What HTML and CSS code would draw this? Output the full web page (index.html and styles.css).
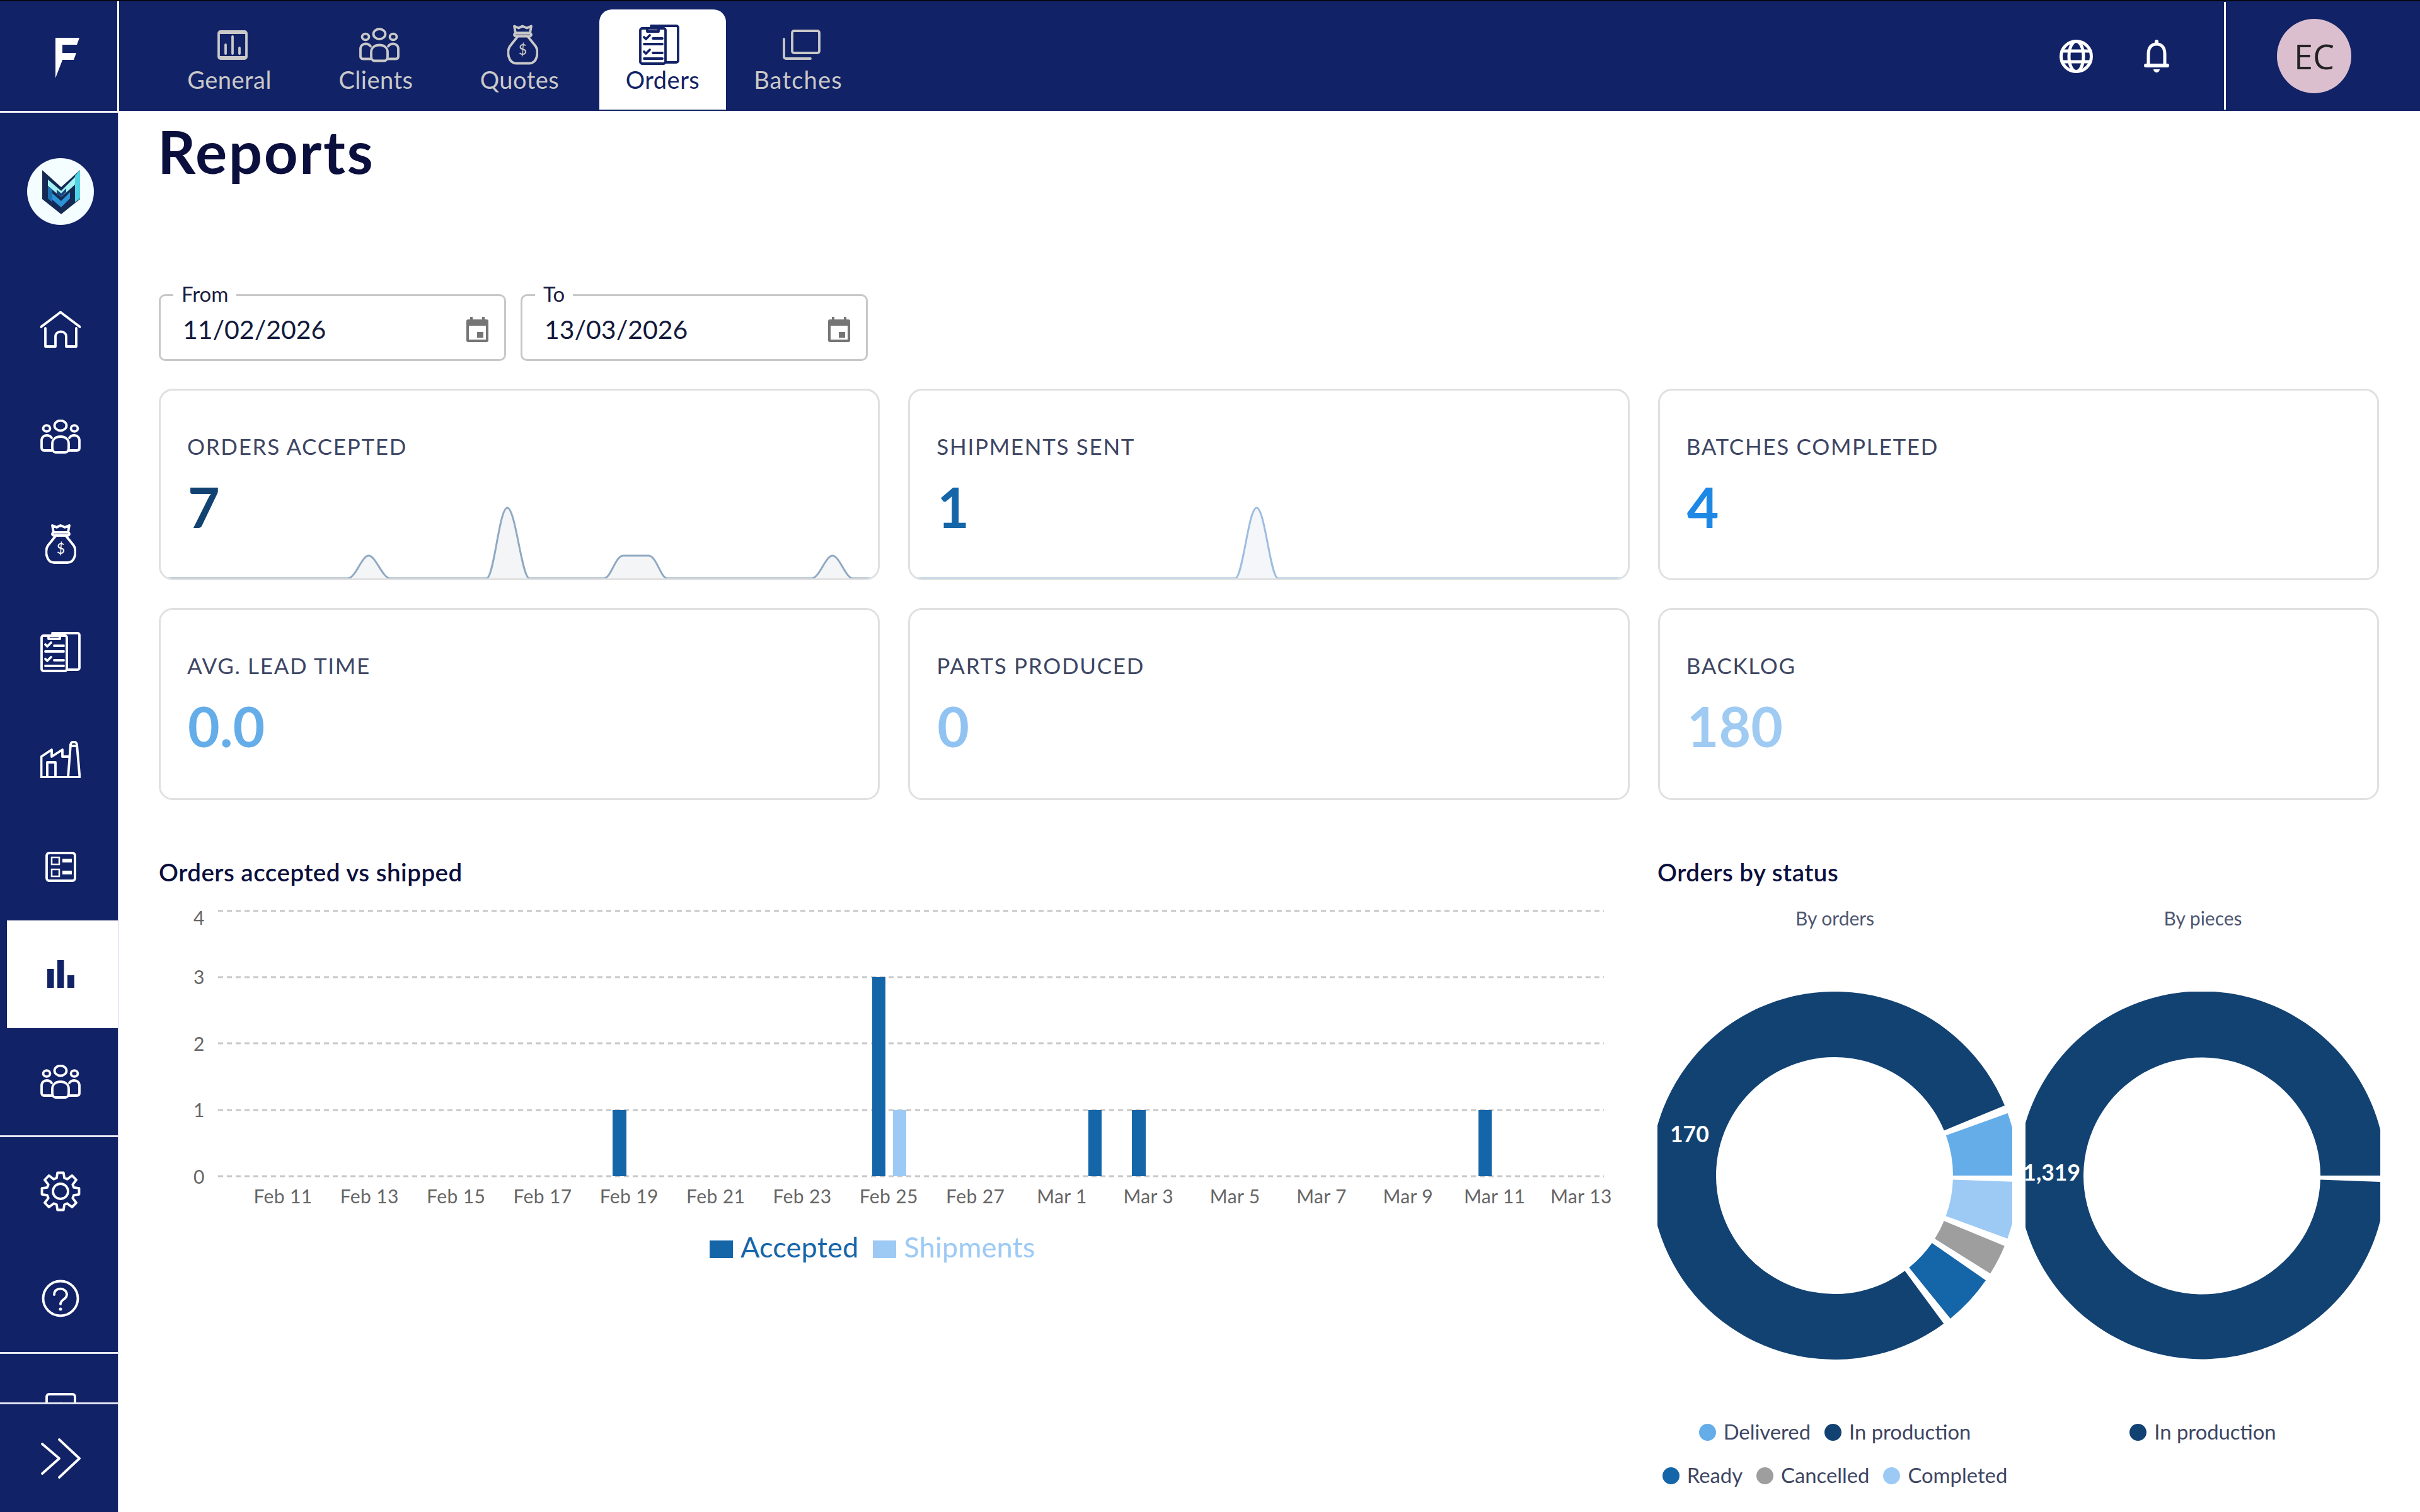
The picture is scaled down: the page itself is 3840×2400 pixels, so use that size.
FILE: index.html
```html
<!DOCTYPE html>
<html lang="en">
<head>
<meta charset="utf-8">
<title>Reports</title>
<link rel="stylesheet" href="styles.css">
</head>
<body>
<svg class="sprite" xmlns="http://www.w3.org/2000/svg">
  <symbol id="i-general" viewBox="0 0 48 49"><rect x="2" y="3" width="44" height="43" rx="3"/><path d="M2 7V5a3 3 0 0 1 3-3h38a3 3 0 0 1 3 3v2zM2 42v2a3 3 0 0 0 3 3h38a3 3 0 0 0 3-3v-2z" class="solid"/><path d="M13 38V24M24 38V11M35 38V29"/></symbol>
  <symbol id="i-clients" viewBox="0 0 64 54"><ellipse cx="32" cy="9.5" rx="9.5" ry="8"/><ellipse cx="10" cy="14" rx="5.5" ry="4.8"/><ellipse cx="54" cy="14" rx="5.5" ry="4.8"/><path d="M19 45V38C19 31 25 27 32 27S45 31 45 38V45C45 49 43 52 40 52H24C21 52 19 49 19 45Z"/><path d="M19 49H6C3 49 2 47 2 45V33C2 28 6 25 10 25C13 25 16 26 18 29"/><path d="M45 49H58C61 49 62 47 62 45V33C62 28 58 25 54 25C51 25 48 26 46 29"/></symbol>
  <symbol id="i-bag" viewBox="0 0 49 63"><path d="M11 2L18 5L24 2L31 5L38 2L36 13H13Z"/><rect x="11" y="13" width="27" height="5" rx="2.5"/><path d="M16 19L4 34C-1 42 1 61 14 61H35C48 61 50 42 45 34L33 19"/><text x="24.5" y="47" class="dollar">$</text></symbol>
  <symbol id="i-orders" viewBox="0 0 64 64"><path d="M19 2H59a3 3 0 0 1 3 3V57a3 3 0 0 1-3 3H42"/><rect x="2" y="6" width="40" height="56" rx="3"/><path d="M13 11V6H18L22 1L26 6H31V11Z"/><path d="M8 20l3 3l6-6M22 22H37M8 31H37M8 43l3 3l6-6M22 45H37M8 54H37"/></symbol>
  <symbol id="i-batches" viewBox="0 0 60 48"><rect x="15" y="2" width="43" height="35" rx="3"/><path d="M2 15V43a3 3 0 0 0 3 3H44"/></symbol>
  <symbol id="i-home" viewBox="0 0 64 58"><path d="M1 25L32 1.500L63 25"/><path d="M8 27V56H24V40C24 30 41 30 41 40V56H57V27"/></symbol>
  <symbol id="i-factory" viewBox="0 0 64 59"><path d="M1.500 58H62.500L58 6C58 0 48 0 48 6L44 58"/><path d="M1.500 58V25L18 14V25L35 14V25H46"/><rect x="11" y="34" width="13" height="24"/><path d="M48 8H58"/></symbol>
  <symbol id="i-form" viewBox="0 0 49 48"><rect x="2" y="2" width="45" height="44" rx="4"/><rect x="10" y="9" width="12" height="11" class="thin"/><rect x="10" y="28" width="12" height="11" class="thin"/><rect x="27" y="11" width="15" height="6" class="solid"/><rect x="27" y="30" width="15" height="6" class="solid"/></symbol>
  <symbol id="i-chart" viewBox="0 0 43 44"><rect x="0" y="14" width="10.500" height="30" class="solid"/><rect x="16" y="0" width="10.500" height="44" class="solid"/><rect x="32" y="24" width="11" height="20" class="solid"/></symbol>
  <symbol id="i-gear" viewBox="0 0 64 64"><path d="M25.940 10.850L27.150 2.500H36.850L38.060 10.850L42.670 12.760L50.220 6.920L57.080 13.780L51.240 21.330L53.150 25.940L61.500 27.150V36.850L53.150 38.060L51.240 42.670L57.080 50.220L50.220 57.080L42.670 51.240L38.060 53.150L36.850 61.500H27.150L25.940 53.150L21.330 51.240L13.780 57.080L6.920 50.220L12.760 42.670L10.850 38.060L2.500 36.850V27.150L10.850 25.940L12.760 21.330L6.920 13.780L13.780 6.920L21.330 12.760Z"/><circle cx="32" cy="32" r="12"/></symbol>
  <symbol id="i-help" viewBox="0 0 60 60"><circle cx="30" cy="30" r="27.500"/><path d="M20 24C20 11 40 12 40 24C40 32 30 31 30 39"/><circle cx="30" cy="47" r="2.500" class="solid"/></symbol>
  <symbol id="i-upload" viewBox="0 0 49 48"><rect x="2" y="2" width="45" height="44" rx="4"/><path d="M24.500 14L15 26H34Z" class="solid"/></symbol>
  <symbol id="i-chevrons" viewBox="0 0 64 64"><path d="M3 9L30 32L3 56M30 2L62 32L30 62"/></symbol>
  <symbol id="i-globe" viewBox="0 0 53 53"><circle cx="26.500" cy="26.500" r="24"/><ellipse cx="26.500" cy="26.500" rx="11.500" ry="24"/><path d="M4 18H49M4 35H49"/></symbol>
  <symbol id="i-bell" viewBox="0 0 40 52"><path d="M7 41V23C7 12 12 7 20 7S33 12 33 23V41"/><rect x="0" y="38" width="40" height="6" rx="3" class="solid"/><rect x="17" y="0" width="6" height="9" rx="3" class="solid"/><path d="M15 47H25C25 50 22 52 20 52S15 50 15 47Z" class="solid"/></symbol>
  <symbol id="i-calendar" viewBox="0 0 35 40"><path d="M6 0H10V4H25V0H29V4H32a3 3 0 0 1 3 3V37a3 3 0 0 1-3 3H3a3 3 0 0 1-3-3V7a3 3 0 0 1 3-3H6ZM4 14V36H31V14ZM17 24H27V33H17Z" class="solid even"/></symbol>
</svg>

<header class="topbar">
  <div class="brand">
    <svg class="brand-f" viewBox="0 0 38 64"><path d="M0 0H38L34 11H11V24H33L29 35H11L10 38L0 64Z"/></svg>
  </div>
  <nav class="tabs">
    <a class="tab"><span class="tab-icon"><svg class="ico i48"><use href="#i-general"/></svg></span><span class="tab-label">General</span></a>
    <a class="tab"><span class="tab-icon"><svg class="ico i64x57"><use href="#i-clients"/></svg></span><span class="tab-label">Clients</span></a>
    <a class="tab"><span class="tab-icon"><svg class="ico i49x64"><use href="#i-bag"/></svg></span><span class="tab-label">Quotes</span></a>
    <a class="tab active"><span class="tab-icon"><svg class="ico i64"><use href="#i-orders"/></svg></span><span class="tab-label">Orders</span></a>
    <a class="tab tab-end"><span class="tab-icon"><svg class="ico i60x48"><use href="#i-batches"/></svg></span><span class="tab-label">Batches</span></a>
  </nav>
  <div class="actions">
    <svg class="ico globe"><use href="#i-globe"/></svg>
    <svg class="ico bell"><use href="#i-bell"/></svg>
  </div>
  <div class="user"><span class="avatar">EC</span></div>
</header>

<div class="layout">
  <aside class="sidebar">
    <div class="org"><svg class="org-logo" viewBox="0 0 106 106">
      <circle cx="53" cy="53" r="53" fill="#f4fdff"/>
      <path d="M24 19L54 46L84 19V65L54 89L24 65Z" fill="#142a55"/>
      <path d="M33 34L54 52L76 30V42L54 62L33 44Z" fill="#a4f2f2"/>
      <path d="M84 19V64L76 70V28Z" fill="#4fd4e6"/>
      <path d="M33 44V64L40 70V50Z" fill="#1d6fb0"/>
      <path d="M40 56L54 68L68 54V64L54 78L40 66Z" fill="#2c93d6"/>
      <path d="M47 50L54 56L62 48V54L54 62L47 56Z" fill="#16457c"/>
    </svg></div>
    <nav class="side-nav">
      <div class="side-group">
        <a class="side-item"><svg class="ico i64x58"><use href="#i-home"/></svg></a>
        <a class="side-item"><svg class="ico i64x54"><use href="#i-clients"/></svg></a>
        <a class="side-item"><svg class="ico i49x63"><use href="#i-bag"/></svg></a>
        <a class="side-item"><svg class="ico i64"><use href="#i-orders"/></svg></a>
        <a class="side-item"><svg class="ico i64x59"><use href="#i-factory"/></svg></a>
        <a class="side-item"><svg class="ico i49x48"><use href="#i-form"/></svg></a>
        <a class="side-item active"><svg class="ico i43x44"><use href="#i-chart"/></svg></a>
        <a class="side-item"><svg class="ico i64x54"><use href="#i-clients"/></svg></a>
      </div>
      <div class="side-group">
        <a class="side-item"><svg class="ico i64"><use href="#i-gear"/></svg></a>
        <a class="side-item"><svg class="ico i60"><use href="#i-help"/></svg></a>
      </div>
      <div class="side-group">
        <a class="side-item"><svg class="ico i49x48"><use href="#i-upload"/></svg></a>
      </div>
    </nav>
    <div class="side-foot"><svg class="ico i64"><use href="#i-chevrons"/></svg></div>
  </aside>

  <main class="main">
    <h1 class="title">Reports</h1>

    <div class="dates">
      <fieldset class="date"><legend>From</legend><div class="date-row"><span class="date-value">11/02/2026</span><svg class="ico cal"><use href="#i-calendar"/></svg></div></fieldset>
      <fieldset class="date"><legend>To</legend><div class="date-row"><span class="date-value">13/03/2026</span><svg class="ico cal"><use href="#i-calendar"/></svg></div></fieldset>
    </div>

    <section class="kpis">
      <article class="kpi">
        <div class="kpi-label">ORDERS ACCEPTED</div>
        <div class="kpi-value c1">7</div>
        <svg class="spark spark-a" viewBox="0 0 1144 130" width="1144" height="130">
          <path class="fill" d="M300 127C312 127 322 91 333 91C344 91 355 127 367 127ZM520 127C532 127 540 15 553 15C566 15 576 127 588 127ZM706 127C718 127 724 91 737 91H777C790 91 796 127 807 127ZM1036 127C1048 127 1058 91 1069 91C1080 91 1090 127 1101 127Z"/>
          <path class="line" d="M0 127H300C312 127 322 91 333 91C344 91 355 127 367 127H520C532 127 540 15 553 15C566 15 576 127 588 127H706C718 127 724 91 737 91H777C790 91 796 127 807 127H1036C1048 127 1058 91 1069 91C1080 91 1090 127 1101 127H1144"/>
        </svg>
      </article>
      <article class="kpi">
        <div class="kpi-label">SHIPMENTS SENT</div>
        <div class="kpi-value c2">1</div>
        <svg class="spark spark-b" viewBox="0 0 1144 130" width="1144" height="130">
          <path class="fill" d="M519 127C531 127 540 15 553 15C566 15 575 127 587 127Z"/>
          <path class="line" d="M0 127H519C531 127 540 15 553 15C566 15 575 127 587 127H1144"/>
        </svg>
      </article>
      <article class="kpi">
        <div class="kpi-label">BATCHES COMPLETED</div>
        <div class="kpi-value c3">4</div>
      </article>
      <article class="kpi">
        <div class="kpi-label">AVG. LEAD TIME</div>
        <div class="kpi-value c4">0.0</div>
      </article>
      <article class="kpi">
        <div class="kpi-label">PARTS PRODUCED</div>
        <div class="kpi-value c5">0</div>
      </article>
      <article class="kpi">
        <div class="kpi-label">BACKLOG</div>
        <div class="kpi-value c6">180</div>
      </article>
    </section>

    <section class="charts">
      <div class="bar-panel">
        <h2 class="panel-title">Orders accepted vs shipped</h2>
        <svg class="bars" viewBox="0 0 2335 500" width="2335" height="500">
          <g class="grid">
            <path d="M94 26H2293"/><path d="M94 131H2293"/><path d="M94 236H2293"/><path d="M94 342H2293"/><path d="M94 447H2293"/>
          </g>
          <g class="yt">
            <text x="64" y="48">4</text><text x="64" y="142">3</text><text x="64" y="248">2</text><text x="64" y="353">1</text><text x="64" y="459">0</text>
          </g>
          <g class="xt">
            <text x="197" y="490">Feb 11</text><text x="334.300" y="490">Feb 13</text><text x="471.700" y="490">Feb 15</text><text x="609" y="490">Feb 17</text>
            <text x="746.300" y="490">Feb 19</text><text x="883.700" y="490">Feb 21</text><text x="1021" y="490">Feb 23</text><text x="1158.300" y="490">Feb 25</text>
            <text x="1295.700" y="490">Feb 27</text><text x="1433" y="490">Mar 1</text><text x="1570.300" y="490">Mar 3</text><text x="1707.700" y="490">Mar 5</text>
            <text x="1845" y="490">Mar 7</text><text x="1982.300" y="490">Mar 9</text><text x="2119.700" y="490">Mar 11</text><text x="2257" y="490">Mar 13</text>
          </g>
          <g class="b-acc">
            <rect x="720" y="342" width="22" height="105"/><rect x="1132" y="131" width="21" height="316"/><rect x="1475" y="342" width="21" height="105"/><rect x="1544" y="342" width="22" height="105"/><rect x="2094" y="342" width="21" height="105"/>
          </g>
          <rect class="b-ship" x="1165" y="342" width="21" height="105"/>
        </svg>
        <div class="bar-legend">
          <span class="bl acc"><i></i>Accepted</span>
          <span class="bl ship"><i></i>Shipments</span>
        </div>
      </div>

      <div class="status-panel">
        <h2 class="panel-title status-title">Orders by status</h2>
        <div class="donuts">
          <div class="donut">
            <div class="donut-name">By orders</div>
            <svg class="ring" viewBox="0 0 563 584" width="563" height="584">
              <path class="s-dark" d="M551 180.700A292 292 0 1 0 454.300 527L392.600 443.300A188 188 0 1 1 454.800 220.400Z"/>
              <path class="s-deliv" d="M573 292A292 292 0 0 0 555.700 193.100L457.900 228.300A188 188 0 0 1 469 292Z"/>
              <path class="s-compl" d="M555.400 391.900A292 292 0 0 0 572.800 302.200L468.900 298.600A188 188 0 0 1 457.700 356.300Z"/>
              <path class="s-canc" d="M528.100 447.600A292 292 0 0 0 550.800 403.700L454.700 363.900A188 188 0 0 1 440.100 392.200Z"/>
              <path class="s-ready" d="M464.800 518.900A292 292 0 0 0 521 458.200L435.600 399A188 188 0 0 1 399.300 438.100Z"/>
              <text class="ring-num" x="20" y="239">170</text>
            </svg>
            <div class="legend">
              <span class="lg"><i class="s-deliv-bg"></i>Delivered</span>
              <span class="lg"><i class="s-dark-bg"></i>In production</span>
              <span class="lg"><i class="s-ready-bg"></i>Ready</span>
              <span class="lg"><i class="s-canc-bg"></i>Cancelled</span>
              <span class="lg"><i class="s-compl-bg"></i>Completed</span>
            </div>
          </div>
          <div class="donut">
            <div class="donut-name">By pieces</div>
            <svg class="ring" viewBox="0 0 563 584" width="563" height="584">
              <path class="s-dark" d="M572 292A292 292 0 1 0 571.800 302.200L467.900 298.600A188 188 0 1 1 468 292Z"/>
              <text class="ring-num end" x="87" y="300">1,319</text>
            </svg>
            <div class="legend">
              <span class="lg"><i class="s-dark-bg"></i>In production</span>
            </div>
          </div>
        </div>
      </div>
    </section>
  </main>
</div>
</body>
</html>
```

FILE: styles.css
```css
* { box-sizing: border-box; }
html, body { margin: 0; padding: 0; }
body {
  width: 3840px;
  height: 2400px;
  overflow: hidden;
  background: #fff;
  font-family: "Lato", "Noto Sans", sans-serif;
  color: #0b0f3d;
  display: flex;
  flex-direction: column;
}
.sprite { display: none; }

.ico { fill: none; stroke: currentColor; stroke-width: 3.8; stroke-linecap: round; stroke-linejoin: round; display: block; flex: none; }
.solid { fill: currentColor; stroke: none; }
.even { fill-rule: evenodd; }
.thin { stroke-width: 2.5; stroke-linecap: butt; stroke-linejoin: miter; }
.dollar { font: 400 23px "Lato", sans-serif; text-anchor: middle; fill: currentColor; stroke: none; }

.i48 { width: 48px; height: 49px; }
.i64 { width: 64px; height: 64px; }
.i60 { width: 60px; height: 60px; }
.i64x57 { width: 64px; height: 57px; }
.i64x58 { width: 64px; height: 58px; }
.i64x54 { width: 64px; height: 54px; }
.i64x59 { width: 64px; height: 59px; }
.i49x64 { width: 49px; height: 64px; }
.i49x63 { width: 49px; height: 63px; }
.i49x48 { width: 49px; height: 48px; }
.i43x44 { width: 43px; height: 44px; }
.i60x48 { width: 60px; height: 48px; }

/* Top bar */
.topbar {
  flex: none;
  height: 176px;
  display: flex;
  background: #122266;
  border-top: 2px solid #05060f;
}
.brand {
  width: 189px;
  flex: none;
  border-right: 3px solid #fff;
  display: flex;
  align-items: center;
  justify-content: center;
}
.brand-f { width: 38px; height: 64px; fill: #fff; margin-top: 6px; margin-left: 28px; }
.tabs {
  display: grid;
  grid-template-columns: 218px 203px 209px 201px 205px;
  column-gap: 22px;
  align-items: start;
  padding-left: 66px;
  padding-top: 13px;
}
.tab {
  display: flex;
  flex-direction: column;
  align-items: center;
  padding-top: 24px;
  color: #c9c9c9;
  border-radius: 20px 20px 0 0;
}
.tab.active { background: #fff; color: #122266; height: 159px; }
.tab-end { margin-left: -20px; }
.tab-icon { height: 64px; display: flex; align-items: center; margin-left: 10px; }
.tab.active .tab-icon { margin-left: 0; margin-right: 12px; }
.tab-label { margin-top: 2px; font-size: 38px; line-height: 42px; letter-spacing: 0.5px; white-space: nowrap; }
.tab-end .tab-label { letter-spacing: 1.2px; }
.actions { margin-left: auto; display: flex; align-items: center; gap: 81px; padding-right: 87px; color: #fff; }
.globe { width: 53px; height: 53px; stroke-width: 5; }
.bell { width: 40px; height: 52px; stroke-width: 5; }
.user {
  flex: none;
  width: 311px;
  border-left: 3px solid #fff;
  margin: 1px 0 0;
  height: 171px;
  display: flex;
  align-items: center;
  padding-left: 81px;
}
.avatar {
  width: 118px;
  height: 118px;
  border-radius: 50%;
  background: #dcbfcf;
  color: #222;
  font: 400 54px/118px "Open Sans", sans-serif;
  text-align: center;
}

/* Layout */
.layout { flex: 1; display: flex; min-height: 0; }
.sidebar {
  flex: none;
  width: 188px;
  display: flex;
  flex-direction: column;
  background: #122266;
  border-top: 3px solid #f1f3fa;
  border-right: 1px solid #c9d2ea;
  color: #fff;
}
.org { height: 258.500px; flex: none; display: flex; justify-content: center; padding: 72px 0 0 5px; }
.org-logo { width: 106px; height: 106px; display: block; }
.side-nav { flex: 1; min-height: 0; overflow: hidden; }
.side-group + .side-group { border-top: 3px solid #e4e7f2; }
.side-item { height: 170.600px; display: flex; align-items: center; justify-content: center; padding-left: 5px; }
.side-item.active { background: #fff; color: #122266; margin-left: 11px; padding: 0 6px 0 0; }
.side-foot {
  flex: none;
  height: 174px;
  border-top: 3px solid #e4e7f2;
  display: flex;
  align-items: center;
  justify-content: center;
  padding-left: 5px;
}

/* Main */
.main { flex: 1; min-width: 0; padding: 10px 65px 0 64px; }
.title { margin: 0 0 0 -2px; font-size: 94px; line-height: 108px; font-weight: 700; color: #0b0f3d; letter-spacing: 2.6px; }
.dates { display: flex; gap: 23px; margin-top: 156px; }
.date {
  margin: 0;
  width: 551px;
  height: 123px;
  min-width: 0;
  border: 3px solid #c8c8c8;
  border-radius: 10px;
  padding: 0 25px 12px 35px;
}
.date legend { margin-left: -15px; padding: 0 13px 4px; font-size: 33px; line-height: 32px; color: #1a2040; }
.date-row { display: flex; align-items: center; justify-content: space-between; height: 100%; }
.date-value { font-size: 41px; color: #141a3c; }
.cal { width: 35px; height: 40px; color: #757575; stroke: none; margin-top: 2px; }

.kpis { display: grid; grid-template-columns: repeat(3, 1fr); grid-template-rows: 304px 305px; gap: 44px 45px; margin-top: 44px; }
.kpi {
  position: relative;
  overflow: hidden;
  border: 3px solid #e0e0e0;
  border-radius: 22px;
  padding: 68px 0 0 42px;
}
.kpi-label { font-size: 35px; line-height: 40px; color: #3d4663; letter-spacing: 1.7px; }
.kpi-value { font-size: 87.500px; line-height: 100px; font-weight: 700; margin-top: 27px; margin-left: 1px; }
.c1 { color: #124272; } .c2 { color: #1565a9; } .c3 { color: #1e88e5; }
.c4 { color: #64ade9; } .c5 { color: #90c3f2; } .c6 { color: #9fcbf3; }
.spark { position: absolute; left: -3px; bottom: -3px; display: block; }
.spark .fill { stroke: none; }
.spark .line { fill: none; stroke-width: 3; }
.spark-a .fill { fill: #f3f5f7; } .spark-a .line { stroke: #90a9c3; }
.spark-b .fill { fill: #f4f6fa; } .spark-b .line { stroke: #9dbde0; }

.charts { display: grid; grid-template-columns: 2335px 1fr; gap: 45px; margin-top: 89px; }
.panel-title { margin: 0; font-size: 38.500px; line-height: 50px; font-weight: 600; color: #0b0f3d; letter-spacing: 0.5px; }
.status-title { margin-left: -2px; }
.bars { display: block; margin-top: 11px; }
.grid path { stroke: #c8c8c8; stroke-width: 3; stroke-dasharray: 8 6; fill: none; }
.yt text, .xt text { font-size: 30px; fill: #666; text-anchor: middle; letter-spacing: 0.4px; }
.b-acc rect { fill: #1565a9; }
.b-ship { fill: #9ccaf5; }
.bar-legend { display: flex; gap: 23px; padding-left: 874px; margin-top: 31px; font-size: 45px; line-height: 56px; letter-spacing: 0.2px; }
.bl { display: flex; align-items: center; gap: 12px; }
.bl i { width: 37px; height: 28px; display: block; margin-top: 8px; }
.acc { color: #1565a9; } .acc i { background: #1565a9; }
.ship { color: #9ccaf5; } .ship i { background: #9ccaf5; }

.donuts { display: grid; grid-template-columns: 563px 563px; gap: 21px; margin-left: -2px; }
.donut-name { text-align: center; font-size: 30px; line-height: 40px; margin-top: 28px; color: #4d5670; }
.ring { display: block; margin-top: 97px; }
.ring path { stroke: none; }
.s-dark { fill: #124272; } .s-deliv { fill: #64ade9; } .s-compl { fill: #9ccaf5; } .s-canc { fill: #9e9e9e; } .s-ready { fill: #1565a9; }
.ring-num { font-size: 35.500px; font-weight: 700; fill: #fff; }
.ring-num.end { text-anchor: end; }
.legend { display: flex; flex-wrap: wrap; justify-content: center; gap: 29px 22px; margin-top: 95px; }
.lg { display: flex; align-items: center; gap: 12px; font-size: 32.800px; line-height: 40px; color: #3d4663; white-space: nowrap; }
.lg i { width: 27px; height: 27px; border-radius: 50%; display: block; }
.s-dark-bg { background: #124272; } .s-deliv-bg { background: #64ade9; } .s-compl-bg { background: #9ccaf5; } .s-canc-bg { background: #9e9e9e; } .s-ready-bg { background: #1565a9; }
```
